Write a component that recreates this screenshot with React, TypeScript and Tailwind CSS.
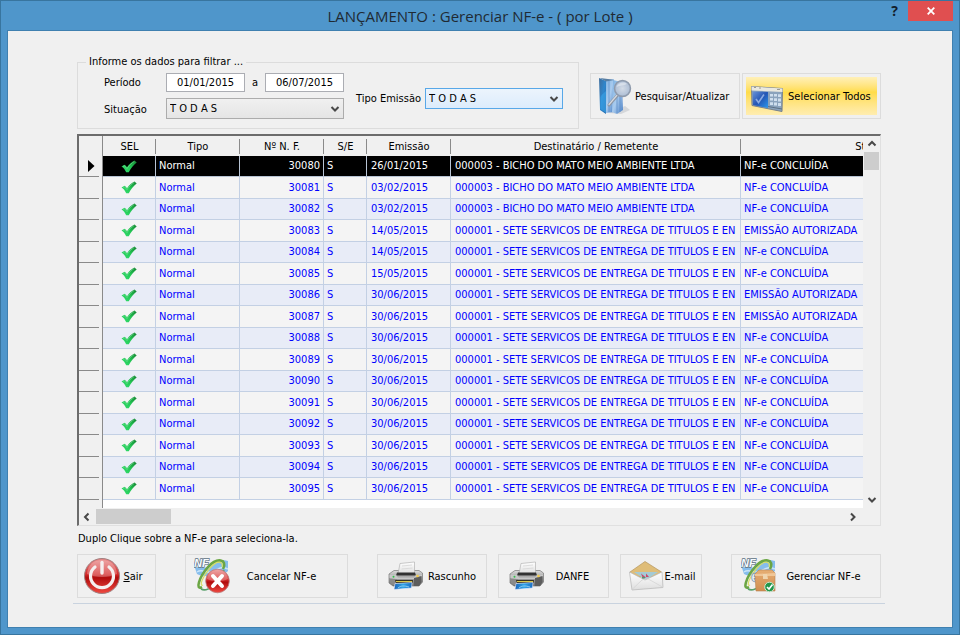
import React from 'react';

const rows = [
    ['30080', '26/01/2015', '000003 - BICHO DO MATO MEIO AMBIENTE LTDA', 'NF-e CONCLUÍDA'],
    ['30081', '03/02/2015', '000003 - BICHO DO MATO MEIO AMBIENTE LTDA', 'NF-e CONCLUÍDA'],
    ['30082', '03/02/2015', '000003 - BICHO DO MATO MEIO AMBIENTE LTDA', 'NF-e CONCLUÍDA'],
    ['30083', '14/05/2015', '000001 - SETE SERVICOS DE ENTREGA DE TITULOS E EN', 'EMISSÃO AUTORIZADA'],
    ['30084', '14/05/2015', '000001 - SETE SERVICOS DE ENTREGA DE TITULOS E EN', 'NF-e CONCLUÍDA'],
    ['30085', '15/05/2015', '000001 - SETE SERVICOS DE ENTREGA DE TITULOS E EN', 'NF-e CONCLUÍDA'],
    ['30086', '30/06/2015', '000001 - SETE SERVICOS DE ENTREGA DE TITULOS E EN', 'EMISSÃO AUTORIZADA'],
    ['30087', '30/06/2015', '000001 - SETE SERVICOS DE ENTREGA DE TITULOS E EN', 'EMISSÃO AUTORIZADA'],
    ['30088', '30/06/2015', '000001 - SETE SERVICOS DE ENTREGA DE TITULOS E EN', 'NF-e CONCLUÍDA'],
    ['30089', '30/06/2015', '000001 - SETE SERVICOS DE ENTREGA DE TITULOS E EN', 'NF-e CONCLUÍDA'],
    ['30090', '30/06/2015', '000001 - SETE SERVICOS DE ENTREGA DE TITULOS E EN', 'NF-e CONCLUÍDA'],
    ['30091', '30/06/2015', '000001 - SETE SERVICOS DE ENTREGA DE TITULOS E EN', 'NF-e CONCLUÍDA'],
    ['30092', '30/06/2015', '000001 - SETE SERVICOS DE ENTREGA DE TITULOS E EN', 'NF-e CONCLUÍDA'],
    ['30093', '30/06/2015', '000001 - SETE SERVICOS DE ENTREGA DE TITULOS E EN', 'NF-e CONCLUÍDA'],
    ['30094', '30/06/2015', '000001 - SETE SERVICOS DE ENTREGA DE TITULOS E EN', 'NF-e CONCLUÍDA'],
    ['30095', '30/06/2015', '000001 - SETE SERVICOS DE ENTREGA DE TITULOS E EN', 'NF-e CONCLUÍDA'],
];

const headers = ['SEL', 'Tipo', 'Nº N. F.', 'S/E', 'Emissão', 'Destinatário / Remetente', 'Status'];

const Gradients = () => (
    <svg width="0" height="0" className="absolute" aria-hidden="true">
        <defs>
            <linearGradient id="check" x1="0" y1="1" x2="1" y2="0">
                <stop offset="0" stopColor="#35e070" />
                <stop offset="0.5" stopColor="#22c654" />
                <stop offset="1" stopColor="#15802f" />
            </linearGradient>
            <linearGradient id="binderDark" x1="0" y1="0" x2="1" y2="1">
                <stop offset="0" stopColor="#3f6d9c" />
                <stop offset="0.5" stopColor="#2f86cc" />
                <stop offset="1" stopColor="#2768a8" />
            </linearGradient>
            <linearGradient id="binderLight" x1="0" y1="0" x2="1" y2="1">
                <stop offset="0" stopColor="#7fb2e2" />
                <stop offset="0.5" stopColor="#a9cbee" />
                <stop offset="1" stopColor="#4a80c6" />
            </linearGradient>
            <radialGradient id="lens">
                <stop offset="0" stopColor="#d3dbe6" />
                <stop offset="0.8" stopColor="#b4c3d8" />
                <stop offset="1" stopColor="#98a7bc" />
            </radialGradient>
            <linearGradient id="screen" x1="0" y1="0" x2="1" y2="1">
                <stop offset="0" stopColor="#6a94d8" />
                <stop offset="0.5" stopColor="#2456b4" />
                <stop offset="1" stopColor="#2c96ec" />
            </linearGradient>
            <linearGradient id="red" x1="0" y1="0" x2="0" y2="1">
                <stop offset="0" stopColor="#e88b8b" />
                <stop offset="0.45" stopColor="#d42a2a" />
                <stop offset="0.55" stopColor="#b00c0c" />
                <stop offset="1" stopColor="#f04a42" />
            </linearGradient>
            <linearGradient id="steel" x1="0" y1="0" x2="0" y2="1">
                <stop offset="0" stopColor="#dcdcdc" />
                <stop offset="0.4" stopColor="#a9a9a9" />
                <stop offset="1" stopColor="#6d6d6d" />
            </linearGradient>
            <linearGradient id="photo" x1="0" y1="0" x2="1" y2="0">
                <stop offset="0" stopColor="#1a63b8" />
                <stop offset="0.5" stopColor="#2fa3e6" />
                <stop offset="1" stopColor="#1b6cc0" />
            </linearGradient>
            <linearGradient id="paper" x1="0" y1="0" x2="0" y2="1">
                <stop offset="0" stopColor="#ffffff" />
                <stop offset="1" stopColor="#dedede" />
            </linearGradient>
            <linearGradient id="carton" x1="0" y1="0" x2="0" y2="1">
                <stop offset="0" stopColor="#e6ae74" />
                <stop offset="1" stopColor="#d08d50" />
            </linearGradient>
        </defs>
    </svg>
);

const CheckIcon = () => (
    <svg width="16" height="13" viewBox="0 0 16 13" className="mx-auto block" role="img" aria-label="Selecionada">
        <path d="M.5 6.500 3.500 4.800C4.500 5.300 5.300 6.200 6 7.200C8.200 4.200 10.500 2 13.500.500L15.700 2.500C12.500 4.800 10 8 7.800 12.200H5.200C4 9.600 2.500 7.800.5 6.500Z" fill="url(#check)" />
        <path d="M2 6.400 3.500 5.800 6 8.600C8.300 5.300 10.500 3.100 13.300 1.500" fill="none" stroke="#8ce8a8" strokeWidth=".7" opacity=".7" />
    </svg>
);

const BinderIcon = () => (
    <svg width="36" height="38" viewBox="0 0 36 38" aria-hidden="true">
        <path d="M12 36 24 37 33 33 28 29Z" fill="#c9ccd0" opacity=".7" />
        <path d="M8 3.500 17 2 17 35 9 36Z" fill="url(#binderLight)" />
        <path d="M16 3 25 5 26 33 20 37 15 35Z" fill="url(#binderLight)" />
        <path d="M20 6V36M23 6V35M12 4V35" stroke="#5c8cc6" strokeWidth="1" opacity=".7" />
        <path d="M2 1 9 4V37L3 33Z" fill="url(#binderDark)" />
        <path d="M3 1 15 2.500 17 3 9 4.500Z" fill="#597fa4" />
        <path d="M3.500 20C5 17 7 16 9 14V36L3.500 32Z" fill="#37a0e4" opacity=".7" />
        <path d="M21.500 17 12 28" stroke="#8d96a4" strokeWidth="3" strokeLinecap="round" />
        <path d="M21 17 12 27.500" stroke="#d5d9e0" strokeWidth="1.200" strokeLinecap="round" />
        <circle cx="25.500" cy="11.500" r="8" fill="url(#lens)" stroke="#8f9bad" strokeWidth="1.400" />
        <path d="M19.500 10A6.500 6.500 0 0 1 30 7C27 9 23 8 19.500 10Z" fill="#fff" opacity=".4" />
    </svg>
);

const PanelIcon = () => (
    <svg width="34" height="28" viewBox="0 0 34 28" aria-hidden="true">
        <path d="M1.500 1.500 32.500 3.500 32 26.500 2 20.500Z" fill="#8aa3bd" stroke="#77818c" />
        <path d="M1.500 1.500 32.500 3.500V7L1.500 5.500Z" fill="#e9e8df" />
        <path d="M4 2.500H6M9 3H11M27 4.500H30" stroke="#9a9a94" />
        <path d="M2.500 6.500 18 7V23L3 20Z" fill="url(#screen)" />
        <path d="M6 14 8.500 17.500 14 9.500" fill="none" stroke="#9bb8ea" strokeWidth="1.600" opacity=".85" />
        <path d="M20 9H23V11.500H20ZM24 9H27V11.500H24ZM28 9.300H31V12H28ZM20 13H23V15.500H20ZM24 13.200H27V16H24ZM28 13.600H31V16.400H28ZM20 17.200H23V20H20ZM24 17.600H27V20.400H24ZM28 18H31V21H28Z" fill="#cfdfee" />
        <path d="M18 21.500 32 24" stroke="#5d7184" />
    </svg>
);

const PowerIcon = () => (
    <svg width="38" height="38" viewBox="0 0 38 38" aria-hidden="true">
        <circle cx="19" cy="19" r="17.500" fill="url(#red)" stroke="#a08080" />
        <path d="M4 17C5 7 11 3 19 3S33 7 34 17C25 21 13 21 4 17Z" fill="#fff" opacity=".26" />
        <path d="M12 10A11.500 11.500 0 1 0 26 10" fill="none" stroke="#f5efef" strokeWidth="3.200" strokeLinecap="round" />
        <path d="M19 5.500V16" stroke="#f5efef" strokeWidth="3.400" strokeLinecap="round" />
    </svg>
);

const NfeMark = () => (
    <>
        <path d="M1 10C6 7 10 12 15 8C20 2 27 1 34 3V13C29 18 10 20 3 16Z" fill="#86bdec" />
        <path d="M3 14C9 10 13 17 20 13S29 9 34 11" fill="none" stroke="#cbe5fa" strokeWidth="1.500" />
        <path d="M8 29C1 33 5 19 14 9S34 1 29 11" fill="none" stroke="#6ba644" strokeWidth="2.600" />
        <path d="M9 27C5 29 8 19 16 10S30 4 28 9" fill="none" stroke="#d9de62" strokeWidth="1.200" />
        <path d="M7 31C12 34 25 28 30 12" fill="none" stroke="#58a06b" strokeWidth="1.600" />
        <text x="0" y="9" fontFamily="'Liberation Sans', sans-serif" fontSize="11" fontWeight="bold" fontStyle="italic" fill="#f6fbff" stroke="#5d7183" strokeWidth="1.400" paintOrder="stroke">NF</text>
    </>
);

const CancelIcon = () => (
    <svg width="38" height="36" viewBox="0 0 38 36" aria-hidden="true">
        <NfeMark />
        <circle cx="23.500" cy="23" r="11.800" fill="url(#red)" stroke="#b98080" strokeWidth=".8" />
        <path d="M13 21C14 14 19 12 23.500 12S33 14 34 21C28 24 19 24 13 21Z" fill="#fff" opacity=".25" />
        <path d="M19 18 28 28M28 18 19 28" stroke="#fff" strokeWidth="4" strokeLinecap="round" />
    </svg>
);

const BoxIcon = () => (
    <svg width="38" height="36" viewBox="0 0 38 36" aria-hidden="true">
        <NfeMark />
        <text x="10" y="24" fontFamily="'Liberation Sans', sans-serif" fontSize="17" fontWeight="bold" fill="#f4f9fd" stroke="#7596b4" strokeWidth=".8">e</text>
        <path d="M14 16 18 12H31L34 15V33H15Z" fill="url(#carton)" stroke="#b98352" strokeWidth=".6" />
        <path d="M14 16 34 15V18H14Z" fill="#f0c696" />
        <path d="M22 16H26L27 21H22Z" fill="#efd4ae" />
        <circle cx="28.500" cy="29" r="4.800" fill="#21964a" stroke="#cce7cf" strokeWidth="1" />
        <path d="M26 29 28 31 31.500 26.500" fill="none" stroke="#fff" strokeWidth="1.600" />
    </svg>
);

const PrinterIcon = () => (
    <svg width="36" height="30" viewBox="0 0 36 30" aria-hidden="true">
        <path d="M1 13 6 9.500H31L34.500 12V21L31 25H5L1 22Z" fill="url(#steel)" stroke="#777" strokeWidth=".7" />
        <path d="M10 13 12 2.500 26.500 1V13Z" fill="url(#paper)" stroke="#aaa" strokeWidth=".6" />
        <path d="M14 5 24 4M13.500 8 24.500 7" stroke="#d5d5d5" strokeWidth=".8" />
        <path d="M9 11.500H27L28 14.500H8Z" fill="#323232" />
        <path d="M1.500 14H8L10 16.500H26L28 14H34V15.500L28 18H8L1.500 17Z" fill="#c8c8c8" />
        <path d="M2 18H9V24H5L2 22Z" fill="#8a8a8a" />
        <path d="M26 17 33.500 15V21L31 25H26Z" fill="#5d5d5d" />
        <path d="M7 19H25L24.500 22H8Z" fill="#353020" />
        <path d="M8 20.500H24" stroke="#d8c84a" />
        <path d="M7 22.500 24 21.500 23.500 27 6 28.500Z" fill="url(#photo)" stroke="#eef" strokeWidth=".6" />
        <path d="M10 27C13 24.500 16 24.500 21 26" fill="none" stroke="#a6d8f2" strokeWidth=".8" />
        <circle cx="5.500" cy="15.800" r="1" fill="#33c04c" />
        <circle cx="29.500" cy="15" r="1.300" fill="#f0c94c" />
    </svg>
);

const MailIcon = () => (
    <svg width="36" height="32" viewBox="0 0 36 32" aria-hidden="true">
        <path d="M2 12 17 1.500 33.500 12 30 17H5Z" fill="#dfbd78" stroke="#b4975e" strokeWidth=".7" />
        <path d="M6 12H30L18 20Z" fill="#a5cad4" />
        <path d="M1.500 12 17 20 34 12 35 27.500 4 30Z" fill="url(#paper)" stroke="#b5b5b5" strokeWidth=".7" />
        <path d="M13 13.500 18 17.500 15 18.500ZM18 13.500 21 17H18Z" fill="#cc4669" />
        <path d="M14 17H17V18.500H14Z" fill="#4e9872" />
        <path d="M4 29.500 14 20C17 18.500 20 18.500 22 20L34.500 27" fill="none" stroke="#d4d4d4" strokeWidth=".8" />
    </svg>
);

const Arrow = ({ d }: { d: string }) => (
    <svg width="10" height="10" viewBox="0 0 10 10" className="shrink-0" aria-hidden="true">
        <path d={d} fill="none" stroke="#484848" strokeWidth="2" />
    </svg>
);

const up = 'M1.500 6.500 5 3 8.500 6.500';
const down = 'M1.500 3 5 6.500 8.500 3';
const left = 'M6.500 1.500 3 5 6.500 8.500';
const right = 'M3 1.500 6.500 5 3 8.500';

type FieldProps = { id: string; className: string };

const Dropdown = ({ id, className }: FieldProps) => (
    <div className="relative">
        <select id={id} className={`block h-[21px] appearance-none border pl-[3px] leading-none ${className}`}>
            <option>T O D A S</option>
        </select>
        <span className="pointer-events-none absolute top-[6px] right-[4px]">
            <Arrow d={down} />
        </span>
    </div>
);

const DateInput = ({ value, label }: { value: string; label: string }) => (
    <input
        type="text"
        aria-label={label}
        defaultValue={value}
        className="h-[19px] w-[79px] border border-[#abadb3] bg-white text-center"
    />
);

type ToolButtonProps = { icon: React.ReactNode; children: React.ReactNode; className: string };

const ToolButton = ({ icon, children, className }: ToolButtonProps) => (
    <button className={`flex h-11 items-center border border-[#dcdcdc] whitespace-nowrap ${className}`}>
        <span className="shrink-0">{icon}</span>
        <span className="flex-1 pt-[2px] text-center">{children}</span>
    </button>
);

const NotesTable = () => (
    <table className="w-[922px] table-fixed border-separate border-spacing-0">
        <colgroup>
            <col className="w-[24px]" />
            <col className="w-[53px]" />
            <col className="w-[84px]" />
            <col className="w-[84px]" />
            <col className="w-[43px]" />
            <col className="w-[84px]" />
            <col className="w-[290px]" />
            <col className="w-[260px]" />
        </colgroup>
        <thead>
            <tr className="bg-[#f0f0f0]">
                <th className="h-5 border-r border-[#8a8a8a] p-0"></th>
                {headers.map((h, i) => (
                    <th key={h} className="h-5 p-0 font-normal">
                        <div className={i === 0 ? 'leading-[15px]' : '-ml-px border-l border-[#8a8a8a] leading-[15px]'}>{h}</div>
                    </th>
                ))}
            </tr>
        </thead>
        <tbody>
            {rows.map(([nf, date, name, status], i) => (
                <tr
                    key={nf}
                    className={
                        i === 0
                            ? 'h-[21px] bg-black text-white *:border-[#b8c4d4]'
                            : 'h-[21px] bg-[#f4f4f4] text-[#0000ff] *:border-[#c3d0e4] odd:bg-[#e8ecf7] even:h-[22px]'
                    }
                >
                    <td className="border-r !border-[#8a8a8a] bg-[#f0f0f0] p-0">
                        <div className="mr-[3px] flex h-[21px] items-center justify-center border-b border-[#8a8a8a] pl-[4px]">
                            {i === 0 && (
                                <svg width="7" height="12" viewBox="0 0 7 12" aria-label="Linha atual">
                                    <path d="M0 0 6.500 6 0 12Z" fill="#000" />
                                </svg>
                            )}
                        </div>
                    </td>
                    <td className="border-r border-b p-0"><CheckIcon /></td>
                    <td className="border-r border-b py-0 pr-0 pl-[3px]">Normal</td>
                    <td className="border-r border-b py-0 pr-[3px] pl-0 text-right">{nf}</td>
                    <td className="border-r border-b py-0 pr-0 pl-[3px]">S</td>
                    <td className="border-r border-b py-0 pr-0 pl-1">{date}</td>
                    <td className="border-r border-b py-0 pr-0 pl-1 whitespace-nowrap">{name}</td>
                    <td className="border-b py-0 pr-0 pl-[3px] whitespace-nowrap">{status}</td>
                </tr>
            ))}
            <tr>
                <td className="h-[8px] border-r border-[#8a8a8a] bg-[#f0f0f0] p-0"></td>
                <td colSpan={7} className="bg-white p-0"></td>
            </tr>
        </tbody>
    </table>
);

const App = () => {
    return (
        <div className="flex min-h-screen flex-col border border-[#38759f] bg-[#4f96cb] px-[6px] pb-[6px] font-['DejaVu_Sans_Condensed','DejaVu_Sans',sans-serif] text-[11px] leading-[14px] text-black">
            <Gradients />

            {/* Title bar */}
            <header className="grid h-[29px] grid-cols-[1fr_auto_1fr]">
                <h1 className="col-start-2 self-center font-['Open_Sans',sans-serif] text-[15px] leading-5 text-[#1f2a33]">
                    LANÇAMENTO : Gerenciar NF-e - ( por Lote )
                </h1>
                <div className="flex items-start justify-end gap-[10px]">
                    <button className="font-['Open_Sans',sans-serif] text-sm leading-5 font-bold text-[#13202b]">?</button>
                    <button aria-label="Fechar" className="flex h-5 w-[45px] items-center justify-center bg-[#e04f50]">
                        <svg width="8" height="8" viewBox="0 0 8 8" aria-hidden="true">
                            <path d="M.700.700 7.300 7.300M7.300.700.700 7.300" stroke="#fff" strokeWidth="1.800" />
                        </svg>
                    </button>
                </div>
            </header>

            <main className="flex-1 border border-[#3f80b0] bg-[#f0f0f0] pt-6 pr-[71px] pl-[69px]">
                {/* Filters */}
                <div className="flex items-end">
                    <fieldset className="flex h-[74px] flex-1 border border-[#dcdcdc] pr-[14px] pl-[26px]">
                        <legend className="-ml-[18px] px-[3px]">Informe os dados para filtrar ...</legend>
                        <div className="flex h-full items-start gap-[12px]">
                            <div className="grid grid-cols-[62px_auto] items-center gap-y-[6px] pt-[4px]">
                                <span>Período</span>
                                <div className="flex items-center justify-between">
                                    <DateInput value="01/01/2015" label="Período inicial" />
                                    <span>a</span>
                                    <DateInput value="06/07/2015" label="Período final" />
                                </div>
                                <label htmlFor="situacao" className="pt-[3px]">Situação</label>
                                <Dropdown id="situacao" className="w-[178px] border-[#acacac] bg-linear-to-b from-[#f0f0f0] to-[#e5e5e5]" />
                            </div>
                            <div className="flex items-center gap-[4px] pt-[19px] whitespace-nowrap">
                                <label htmlFor="tipo">Tipo Emissão</label>
                                <Dropdown id="tipo" className="w-[138px] border-[#58a8e8] bg-linear-to-b from-[#ecf4fc] to-[#dcecfc]" />
                            </div>
                        </div>
                    </fieldset>
                    <div className="mb-[10px] ml-[11px] flex gap-[2px]">
                        <button className="flex h-[46px] w-[150px] items-center gap-[2px] border border-[#dcdcdc] pl-[6px] whitespace-nowrap">
                            <BinderIcon />
                            <span className="pt-[2px]">Pesquisar/Atualizar</span>
                        </button>
                        <button className="h-[46px] w-[139px] border border-[#dcdcdc] p-[3px] whitespace-nowrap">
                            <span className="flex h-full items-center gap-[4px] bg-linear-to-b from-[#fff0b8] via-[#ffdc48] via-40% to-[#ffedb0] pl-[4px]">
                                <span className="pt-[6px]"><PanelIcon /></span>
                                <span className="pt-[2px]">Selecionar Todos</span>
                            </span>
                        </button>
                    </div>
                </div>

                {/* Grid with its two scroll bars */}
                <section className="mt-[5px] border-t-2 border-r border-b border-l-2 border-t-[#6c6c6c] border-r-[#e0e0e0] border-b-[#e0e0e0] border-l-[#6c6c6c]">
                    <div className="flex">
                        <div className="min-w-0 flex-1 overflow-hidden">
                            <NotesTable />
                        </div>
                        <div className="flex w-[17px] flex-col items-center py-[3px]">
                            <Arrow d={up} />
                            <div className="mt-[3px] h-[18px] w-[15px] bg-[#cdcdcd]"></div>
                            <div className="flex-1"></div>
                            <Arrow d={down} />
                        </div>
                    </div>
                    <div className="flex h-[17px] items-center pr-[22px] pl-[3px]">
                        <Arrow d={left} />
                        <div className="ml-[4px] h-[15px] w-[75px] bg-[#cdcdcd]"></div>
                        <div className="flex-1"></div>
                        <Arrow d={right} />
                    </div>
                </section>

                <p className="mt-[6px] pl-px">Duplo Clique sobre a NF-e para seleciona-la.</p>

                {/* Actions */}
                <div className="-mx-[4px] mt-[8px] border-b border-[#c9d3df] px-[4px] pb-[5px]">
                    <div className="flex justify-between">
                        <ToolButton icon={<PowerIcon />} className="w-[79px] pr-[10px] pl-[5px]"><u>S</u>air</ToolButton>
                        <ToolButton icon={<CancelIcon />} className="w-[163px] pr-[16px] pl-[8px]">Cancelar NF-e</ToolButton>
                        <div className="flex gap-[11px]">
                            <ToolButton icon={<PrinterIcon />} className="w-[110px] pr-[6px] pl-[10px]">Rascunho</ToolButton>
                            <ToolButton icon={<PrinterIcon />} className="w-[111px] pr-[8px] pl-[10px]">DANFE</ToolButton>
                            <ToolButton icon={<MailIcon />} className="w-[82px] pr-[5px] pl-[7px]">E-mail</ToolButton>
                        </div>
                        <ToolButton icon={<BoxIcon />} className="w-[150px] pr-[12px] pl-[9px]">Gerenciar NF-e</ToolButton>
                    </div>
                </div>
            </main>
        </div>
    );
};

export default App;
